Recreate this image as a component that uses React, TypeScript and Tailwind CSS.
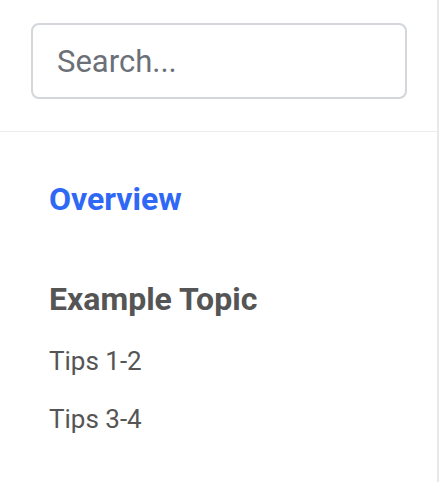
import React from "react";

export default function App() {
  return (
    <div
      className="w-[440px] h-[482px] bg-white flex"
      style={{ fontFamily: "Roboto, 'Liberation Sans', sans-serif" }}
    >
      <div className="w-[439px] h-full border-r-2 border-[#e8e8e8] flex flex-col">
        <div className="h-[132px] border-b border-[#ececec] pl-[31px] pr-[28px] pt-[23px]">
          <input
            type="text"
            placeholder="Search..."
            className="w-[376px] h-[76px] rounded-[8px] border-2 border-[#d3d6da] px-[24px] text-[31px] text-[#333] placeholder:text-[#6b7078] outline-none"
          />
        </div>
        <nav className="pl-[49px] flex flex-col">
          <a className="mt-[48px] text-[32px] font-bold text-[#2f68f5] leading-[38px]">Overview</a>
          <div className="mt-[62px] text-[32px] font-bold text-[#555555] leading-[38px]">Example Topic</div>
          <a className="mt-[27px] text-[26px] text-[#555555] leading-[32px]">Tips 1-2</a>
          <a className="mt-[26px] text-[26px] text-[#555555] leading-[32px]">Tips 3-4</a>
        </nav>
      </div>
    </div>
  );
}
